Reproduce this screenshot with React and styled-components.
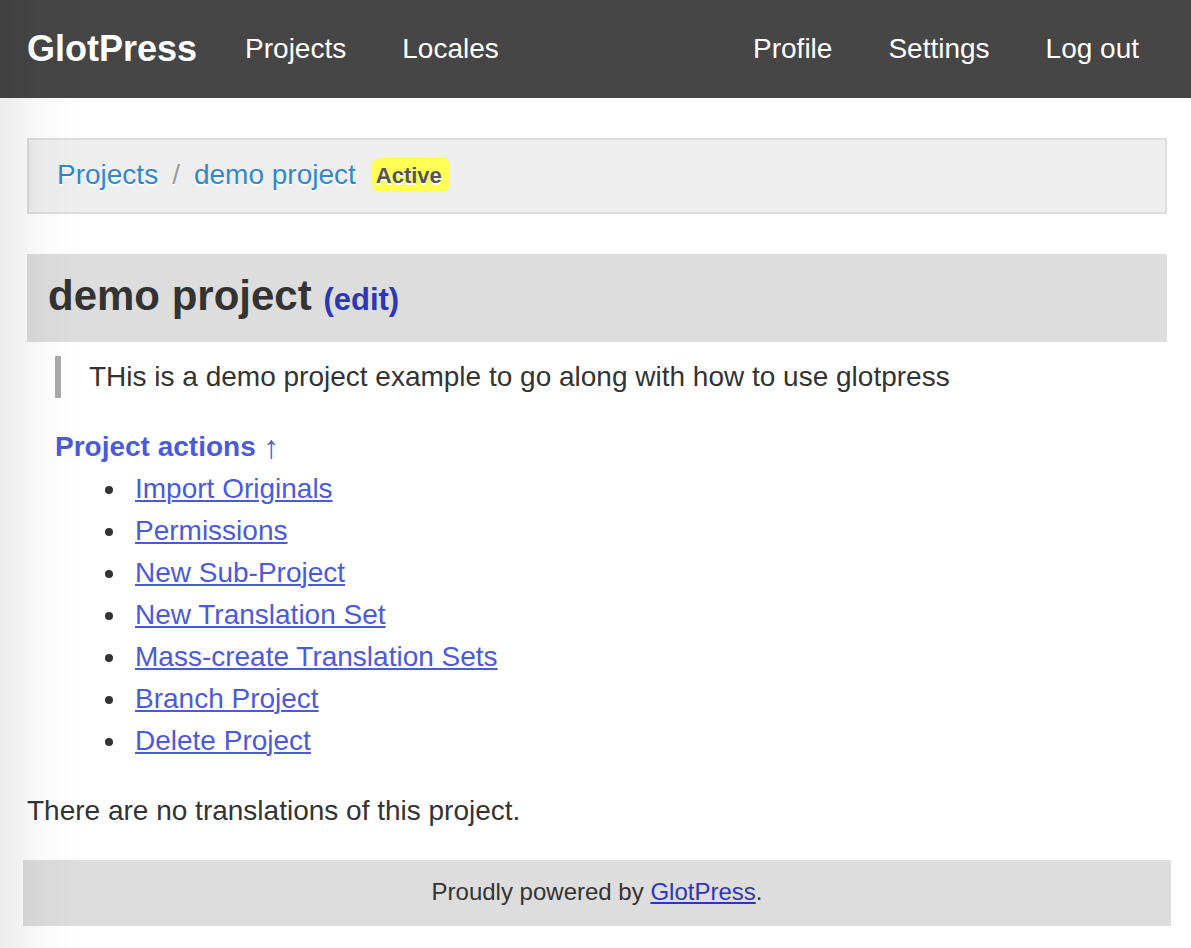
import React from "react";
import styled, { createGlobalStyle } from "styled-components";

const GlobalStyle = createGlobalStyle`
  * { box-sizing: border-box; }
  body {
    margin: 0;
    background: #ffffff;
    color: #333333;
    font: 28px/42px "Liberation Sans", Arial, sans-serif;
  }
`;

/* Soft shade along the left edge of the window, over all content. */
const EdgeShade = styled.div`
  position: fixed;
  inset: 0 auto 0 0;
  width: 84px;
  pointer-events: none;
  background: linear-gradient(
    to right,
    rgba(0, 0, 0, 0.07) 0,
    rgba(0, 0, 0, 0.05) 20px,
    rgba(0, 0, 0, 0.015) 44px,
    rgba(0, 0, 0, 0) 84px
  );
`;

const Header = styled.header`
  display: flex;
  align-items: center;
  height: 98px;
  padding: 0 52px 0 27px;
  background: #464646;
`;

const Logo = styled.a`
  color: #ffffff;
  font-size: 36px;
  font-weight: bold;
  text-decoration: none;
`;

const Nav = styled.nav`
  display: flex;
  gap: 56px;
  margin-left: ${(p) => (p.$end ? "auto" : "48px")};
`;

const NavLink = styled.a`
  color: #ffffff;
  text-decoration: none;
`;

const Content = styled.main`
  padding: 40px 24px 0 27px;
`;

const Breadcrumb = styled.nav`
  display: flex;
  align-items: center;
  height: 76px;
  padding: 0 28px 2px;
  border: 2px solid #dddddd;
  background: #eeeeee;
  text-shadow: 0 2px 0 #ffffff;
`;

const Crumb = styled.a`
  color: #3488c8;
  text-decoration: none;
`;

const Separator = styled.span`
  padding: 0 14px;
  color: #999999;
`;

const Status = styled.span`
  height: 34px;
  margin-left: 16px;
  padding: 0 8px 0 4px;
  border-radius: 8px;
  background: #ffff55;
  color: #555555;
  font-size: 22px;
  font-weight: bold;
  line-height: 36px;
`;

const Title = styled.h2`
  height: 88px;
  margin: 40px 0 14px;
  padding: 0 21px;
  background: #dddddd;
  font-size: 42px;
  line-height: 84px;
`;

const EditLink = styled.a`
  color: #2c37b4;
  font-size: 31px;
  text-decoration: none;
`;

const Description = styled.blockquote`
  margin: 0 28px 28px;
  padding-left: 28px;
  border-left: 6px solid #aaaaaa;
`;

const ActionsToggle = styled.a`
  display: block;
  margin-left: 28px;
  color: #4b5bd8;
  font-weight: bold;
  text-decoration: none;
`;

const Arrow = styled.span`
  font-size: 32px;
  font-weight: normal;
  line-height: 1;
  vertical-align: -2px;
`;

const Actions = styled.ul`
  margin: 0 0 28px;
  padding-left: 101px;
`;

const Action = styled.li`
  padding-left: 7px;
`;

const ActionLink = styled.a`
  color: #4b5bd8;
  text-underline-offset: 2px;
  text-decoration-thickness: 2px;
`;

const Message = styled.p`
  margin: 0 0 28px;
`;

const Footer = styled.footer`
  margin: 0 20px 22px 23px;
  padding: 11px 0 13px;
  background: #dddddd;
  font-size: 24px;
  text-align: center;
`;

const FooterLink = styled.a`
  color: #2c37b4;
  text-underline-offset: 2px;
  text-decoration-thickness: 2px;
`;

const actions = [
  "Import Originals",
  "Permissions",
  "New Sub-Project",
  "New Translation Set",
  "Mass-create Translation Sets",
  "Branch Project",
  "Delete Project",
];

export default function App() {
  return (
    <>
      <GlobalStyle />
      <Header>
        <Logo href="#">GlotPress</Logo>
        <Nav>
          <NavLink href="#">Projects</NavLink>
          <NavLink href="#">Locales</NavLink>
        </Nav>
        <Nav $end>
          <NavLink href="#">Profile</NavLink>
          <NavLink href="#">Settings</NavLink>
          <NavLink href="#">Log out</NavLink>
        </Nav>
      </Header>
      <Content>
        <Breadcrumb>
          <Crumb href="#">Projects</Crumb>
          <Separator>/</Separator>
          <Crumb href="#">demo project</Crumb>
          <Status>Active</Status>
        </Breadcrumb>
        <Title>
          demo project <EditLink href="#">(edit)</EditLink>
        </Title>
        <Description>THis is a demo project example to go along with how to use glotpress</Description>
        <ActionsToggle href="#">
          Project actions <Arrow>↑</Arrow>
        </ActionsToggle>
        <Actions>
          {actions.map((name) => (
            <Action key={name}>
              <ActionLink href="#">{name}</ActionLink>
            </Action>
          ))}
        </Actions>
        <Message>There are no translations of this project.</Message>
      </Content>
      <Footer>
        Proudly powered by <FooterLink href="#">GlotPress</FooterLink>.
      </Footer>
      <EdgeShade />
    </>
  );
}
